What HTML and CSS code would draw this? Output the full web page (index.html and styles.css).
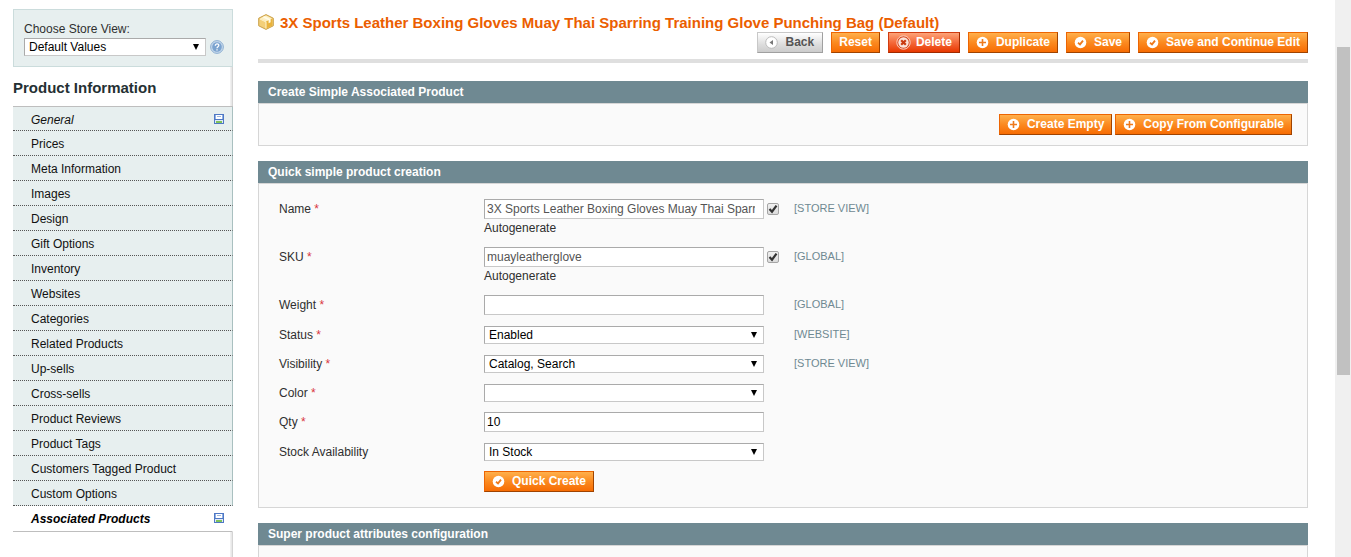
FILE: index.html
```html
<!DOCTYPE html>
<html lang="en">
<head>
<meta charset="utf-8">
<title>3X Sports Leather Boxing Gloves - Manage Products</title>
<link rel="stylesheet" href="styles.css">
</head>
<body>
<svg class="sprite" aria-hidden="true">
  <symbol id="i-plus" viewBox="0 0 13 13"><circle cx="6.5" cy="6.5" r="5.8" fill="#fff"/><path d="M6.5 3v7M3 6.5h7" stroke="#ee7a1c" stroke-width="1.600"/></symbol>
  <symbol id="i-check" viewBox="0 0 13 13"><circle cx="6.5" cy="6.5" r="5.8" fill="#fff"/><path d="M4 6.8l2 1.600 3-3.800" fill="none" stroke="#ee7a1c" stroke-width="1.800"/></symbol>
  <symbol id="i-delete" viewBox="0 0 15 15"><circle cx="7.5" cy="7.5" r="6.7" fill="#d64a20" stroke="#fbd0c0" stroke-width="1"/><circle cx="7.5" cy="7.5" r="5.2" fill="#fbe3da"/><path d="M5.2 5.2l4.6 4.6M9.8 5.2l-4.6 4.6" stroke="#c93a10" stroke-width="2.2"/></symbol>
  <symbol id="i-back" viewBox="0 0 13 13"><circle cx="6.5" cy="6.5" r="5.8" fill="#fff" stroke="#bcbcbc"/><path d="M8 4v5L4.5 6.5z" fill="#777"/></symbol>
  <symbol id="i-disk" viewBox="0 0 10 10"><path d="M0 0h10v10H0z" fill="#4f78c4"/><path d="M1 1h1v4H1zM8 1h1v4H8z" fill="#8fb0e6"/><path d="M2 1h6v4H2z" fill="#fff"/><path d="M3 2.500h4" stroke="#9db6de"/><path d="M1 6h8v3H1z" fill="#dfe9f8"/><path d="M2 7h6v2H2z" fill="#7fc25a"/></symbol>
</svg>
<div class="page">
  <aside class="side">
    <div class="switcher">
      <label for="store">Choose Store View:</label>
      <div class="switcher-row">
        <select id="store"><option>Default Values</option></select>
        <a href="#" class="help" aria-label="Help"><svg viewBox="0 0 14 14" width="14" height="14"><circle cx="7" cy="7" r="6.4" fill="#c5d8ec" stroke="#8fb0d2"/><circle cx="7" cy="7" r="4.8" fill="#7ba3cf"/><path d="M5.3 5.7c0-2.4 3.6-2.2 3.5-.2C8.8 6.700 7 6.700 7 8.200M7 9.200v1.300" fill="none" stroke="#fff" stroke-width="1.300"/></svg></a>
      </div>
    </div>
    <h3>Product Information</h3>
    <ul class="tabs">
      <li><a href="#" class="changed">General<svg><use href="#i-disk"/></svg></a></li>
      <li><a href="#">Prices</a></li>
      <li><a href="#">Meta Information</a></li>
      <li><a href="#">Images</a></li>
      <li><a href="#">Design</a></li>
      <li><a href="#">Gift Options</a></li>
      <li><a href="#">Inventory</a></li>
      <li><a href="#">Websites</a></li>
      <li><a href="#">Categories</a></li>
      <li><a href="#">Related Products</a></li>
      <li><a href="#">Up-sells</a></li>
      <li><a href="#">Cross-sells</a></li>
      <li><a href="#">Product Reviews</a></li>
      <li><a href="#">Product Tags</a></li>
      <li><a href="#">Customers Tagged Product</a></li>
      <li><a href="#">Custom Options</a></li>
      <li><a href="#" class="changed active">Associated Products<svg><use href="#i-disk"/></svg></a></li>
    </ul>
  </aside>
  <main class="main">
    <header class="head">
      <h1><svg viewBox="0 0 16 16" width="16" height="16"><path d="M8 .6l7.300 3.600v7.600L8 15.400.7 11.800V4.200z" fill="#f3cf78" stroke="#c9a04a"/><path d="M8 1.500l6 3-6 3-6-3z" fill="#fdf0c4"/><path d="M8 7.800l6.400-3.200v6.900L8 14.700z" fill="#e9b33c"/><path d="M4.400 3.200l6.200 3v3l2-1v-3L6.400 2.200z" fill="#fffbe8"/><path d="M2 5l6 3v6.500" fill="none" stroke="#fff3cd"/></svg>3X Sports Leather Boxing Gloves Muay Thai Sparring Training Glove Punching Bag (Default)</h1>
      <div class="actions">
        <button class="btn back"><svg><use href="#i-back"/></svg>Back</button>
        <button class="btn">Reset</button>
        <button class="btn delete"><svg><use href="#i-delete"/></svg>Delete</button>
        <button class="btn"><svg><use href="#i-plus"/></svg>Duplicate</button>
        <button class="btn"><svg><use href="#i-check"/></svg>Save</button>
        <button class="btn"><svg><use href="#i-check"/></svg>Save and Continue Edit</button>
      </div>
    </header>
    <section class="entry">
      <h4>Create Simple Associated Product</h4>
      <div class="box tools">
        <button class="btn"><svg><use href="#i-plus"/></svg>Create Empty</button>
        <button class="btn"><svg><use href="#i-plus"/></svg>Copy From Configurable</button>
      </div>
    </section>
    <section class="entry">
      <h4>Quick simple product creation</h4>
      <form class="box form">
        <div class="row">
          <label for="name">Name <em>*</em></label>
          <div class="value"><input class="auto" type="text" id="name" value="3X Sports Leather Boxing Gloves Muay Thai Sparring Training Glove"><input type="checkbox" id="name-auto" checked><label for="name-auto">Autogenerate</label></div>
          <span class="scope">[STORE VIEW]</span>
        </div>
        <div class="row">
          <label for="sku">SKU <em>*</em></label>
          <div class="value"><input class="auto" type="text" id="sku" value="muayleatherglove"><input type="checkbox" id="sku-auto" checked><label for="sku-auto">Autogenerate</label></div>
          <span class="scope">[GLOBAL]</span>
        </div>
        <div class="row">
          <label for="weight">Weight <em>*</em></label>
          <div class="value"><input type="text" id="weight"></div>
          <span class="scope">[GLOBAL]</span>
        </div>
        <div class="row">
          <label for="status">Status <em>*</em></label>
          <div class="value"><select id="status"><option>Enabled</option></select></div>
          <span class="scope">[WEBSITE]</span>
        </div>
        <div class="row">
          <label for="visibility">Visibility <em>*</em></label>
          <div class="value"><select id="visibility"><option>Catalog, Search</option></select></div>
          <span class="scope">[STORE VIEW]</span>
        </div>
        <div class="row">
          <label for="color">Color <em>*</em></label>
          <div class="value"><select id="color"><option></option></select></div>
        </div>
        <div class="row">
          <label for="qty">Qty <em>*</em></label>
          <div class="value"><input type="text" id="qty" value="10"></div>
        </div>
        <div class="row">
          <label for="stock">Stock Availability</label>
          <div class="value"><select id="stock"><option>In Stock</option></select></div>
        </div>
        <div class="row">
          <span></span>
          <div class="value"><button type="button" class="btn"><svg><use href="#i-check"/></svg>Quick Create</button></div>
        </div>
      </form>
    </section>
    <section class="entry">
      <h4>Super product attributes configuration</h4>
      <div class="box tools"></div>
    </section>
  </main>
  <div class="scrollbar"><div class="thumb"></div></div>
</div>
</body>
</html>
```
FILE: styles.css
```css
* { box-sizing: border-box; }
body {
  margin: 0;
  background: #fff;
  color: #2f2f2f;
  font: 12px/18px "Liberation Sans", Arial, sans-serif;
}
.sprite { display: none; }
.page {
  display: flex;
  height: 100vh;
  overflow: hidden;
}

/* Left column */
.side {
  flex: 0 0 220px;
  margin: 9px 0 0 13px;
  background: linear-gradient(to right, #f4f4f4, #e4e4e4 2px, #c4c4c4 3px) right / 3px 100% no-repeat;
}
.switcher {
  height: 58px;
  padding: 10px 8px 10px 10px;
  border: 1px solid #cbdcdc;
  background: #e7efef;
}
.switcher label { display: block; }
.switcher-row { display: flex; align-items: center; gap: 4px; }
.switcher select { width: 182px; }
.help { display: flex; }
.side h3 {
  margin: 0;
  padding: 12px 0 9px;
  color: #253033;
  font-size: 15px;
  line-height: 18px;
}
.tabs {
  margin: 0;
  padding: 0;
  list-style: none;
  border-top: 1px solid #bebebe;
}
.tabs a {
  display: flex;
  justify-content: space-between;
  height: 25px;
  padding: 4px 8px 0 18px;
  border-right: 1px solid #a9c0c0;
  border-bottom: 1px dotted #555;
  background: #e7efef;
  color: #111;
  text-decoration: none;
}
.tabs li:first-child a { height: 24px; }
.tabs svg { width: 10px; height: 10px; margin-top: 3px; }
.tabs .changed { font-style: italic; }
.tabs .active {
  height: 26px;
  border-right-color: #fff;
  border-bottom: 1px solid #bebebe;
  background: #fff;
  font-weight: bold;
  color: #000;
}

/* Content */
.main {
  flex: 1;
  min-width: 0;
  padding: 14px 27px 0 25px;
}
.head {
  margin-bottom: 18px;
  border-bottom: 4px solid #dfdfdf;
  padding-bottom: 6px;
}
h1 {
  display: flex;
  gap: 6px;
  margin: 0;
  color: #eb5e00;
  font-size: 15px;
  line-height: 18px;
  white-space: nowrap;
}
.actions { display: flex; justify-content: flex-end; gap: 8px; }
.btn {
  display: flex;
  align-items: center;
  gap: 7px;
  height: 21px;
  padding: 0 7px 1px;
  border: 1px solid;
  border-color: #ed6502 #a04300 #a04300 #ed6502;
  background: linear-gradient(#ffb04c, #fb8a20 50%, #f76c03);
  color: #fff;
  font: bold 12px/18px "Liberation Sans", Arial, sans-serif;
  white-space: nowrap;
}
.btn svg { width: 13px; height: 13px; margin-top: 1px; }
.back {
  gap: 8px;
  padding-right: 8px;
  border-color: #c8c8c8 #a0a0a0 #a0a0a0 #c8c8c8;
  background: linear-gradient(#fff, #ddd 60%, #ccc);
  color: #555;
}
.delete {
  gap: 5px;
  border-color: #d13c10 #a02a00 #a02a00 #d13c10;
  background: linear-gradient(#fda377, #f4693a 50%, #e83800);
}
.delete svg { width: 15px; height: 15px; }
.entry { margin-bottom: 15px; }
.entry h4 {
  margin: 0;
  padding: 2px 10px;
  background: #6f8992;
  color: #fff;
  font-size: 12px;
  line-height: 18px;
}
.box {
  border: 1px solid #d6d6d6;
  background: #fafafa;
}
.tools {
  display: flex;
  justify-content: flex-end;
  gap: 3px;
  min-height: 43px;
  padding: 10px 15px;
}
.form { padding: 10px 20px; }
.row {
  display: grid;
  grid-template-columns: 205px 310px 1fr;
}
.row > label { padding-top: 5px; line-height: 20px; }
.row em { color: #d9363e; font-style: normal; }
.scope { padding-top: 5px; color: #6f8992; font-size: 11px; line-height: 18px; }
.value {
  display: flex;
  flex-wrap: wrap;
  align-items: center;
  column-gap: 3px;
  padding: 5px 0;
}
.value label { flex-basis: 100%; }
input[type="text"], select {
  width: 280px;
  margin: 0;
  border: 1px solid;
  border-color: #aaa #c8c8c8 #c8c8c8 #aaa;
  border-radius: 0;
  background: #fff;
  color: #000;
  font: 12px/16px "Liberation Sans", Arial, sans-serif;
}
input[type="text"] { height: 20px; padding: 0 2px; }
input[type="text"].auto { padding-right: 8px; color: #555; }
select {
  appearance: none;
  height: 18px;
  padding: 0 20px 0 4px;
  background: #fff url("data:image/svg+xml,%3Csvg xmlns='http://www.w3.org/2000/svg' width='6' height='6'%3E%3Cpath d='M0 0h6L3 6z'/%3E%3C/svg%3E") right 6px center no-repeat;
}
.value select { margin-top: 1px; }
input[type="checkbox"] {
  appearance: none;
  width: 12px;
  height: 12px;
  margin: 0;
  border: 1px solid #a5a5a5;
  border-radius: 2px;
  background: url("data:image/svg+xml,%3Csvg xmlns='http://www.w3.org/2000/svg' width='10' height='10'%3E%3Cpath d='M1.500 5l2.500 2.700L8.500 1.700' fill='none' stroke='%23333' stroke-width='2.200'/%3E%3C/svg%3E") center no-repeat, linear-gradient(#f0f0f0, #dcdcdc);
}

/* Window scroll track */
.scrollbar {
  flex: 0 0 16px;
  padding: 47px 1px 0 2px;
  background: #f0f0f0;
}
.thumb { height: 64.300%; background: #c1c1c1; }
```
